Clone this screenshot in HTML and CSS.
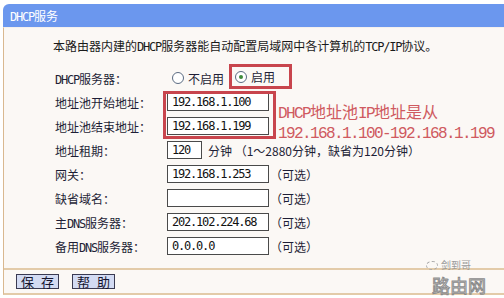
FILE: index.html
```html
<!DOCTYPE html>
<html lang="zh-CN">
<head>
<meta charset="utf-8">
<title>DHCP服务</title>
<link rel="stylesheet" href="styles.css">
</head>
<body>
<div class="page">
  <div class="header"><span class="hw">DHCP</span>服务</div>
  <div class="panel">
    <p class="desc">本路由器内建的<span class="hw">DHCP</span>服务器能自动配置局域网中各计算机的<span class="hw">TCP/IP</span>协议。</p>
    <div class="form">
      <div class="row">
        <span class="label"><span class="hw">DHCP</span>服务器：</span>
        <div class="radios">
          <span class="opt"><span class="radio"></span>不启用</span>
          <span class="opt mark"><span class="radio checked"></span>启用</span>
        </div>
      </div>
      <div class="row">
        <span class="label">地址池开始地址：</span>
        <span class="input">192.168.1.100</span>
      </div>
      <div class="row">
        <span class="label">地址池结束地址：</span>
        <span class="input">192.168.1.199</span>
      </div>
      <div class="row">
        <span class="label">地址租期：</span>
        <span class="input short">120</span>
        <span class="after">分钟 （1～2880分钟，缺省为120分钟）</span>
      </div>
      <div class="row">
        <span class="label">网关：</span>
        <span class="input">192.168.1.253</span>
        <span class="opt-note">（可选）</span>
      </div>
      <div class="row">
        <span class="label">缺省域名：</span>
        <span class="input"></span>
        <span class="opt-note">（可选）</span>
      </div>
      <div class="row">
        <span class="label">主<span class="hw">DNS</span>服务器：</span>
        <span class="input">202.102.224.68</span>
        <span class="opt-note">（可选）</span>
      </div>
      <div class="row">
        <span class="label">备用<span class="hw">DNS</span>服务器：</span>
        <span class="input">0.0.0.0</span>
        <span class="opt-note">（可选）</span>
      </div>
      <div class="callout-box"></div>
      <div class="callout-text">
        <div><span class="mono">DHCP</span>地址池<span class="mono">IP</span>地址是从</div>
        <div class="mono">192.168.1.100-192.168.1.199</div>
      </div>
    </div>
    <div class="footer">
      <span class="btn">保 存</span>
      <span class="btn">帮 助</span>
      <div class="watermark">
        <span class="wm-small"><span class="wm-icon"></span>剑到哥</span>
        <span class="wm-big">路由网</span>
      </div>
    </div>
  </div>
</div>
</body>
</html>
```

FILE: styles.css
```css
* { box-sizing: border-box; }

html, body {
  margin: 0;
  padding: 0;
  background: #ffffff;
  width: 504px;
  height: 298px;
  overflow: hidden;
}

body {
  font-family: "Noto Sans CJK SC", "Noto Sans", sans-serif;
  font-size: 12px;
  color: #1e1e36;
}

.hw {
  font-family: "DejaVu Sans Mono", "Noto Sans CJK SC", monospace;
  letter-spacing: -1.2px;
}

.page {
  padding: 4px 0 0 3px;
}

.header {
  height: 23px;
  line-height: 23px;
  background: #6b97ee;
  border-top-left-radius: 6px;
  color: #ffffff;
  padding-left: 7px;
  font-size: 12px;
}

.panel {
  background: #fbf8f5;
  border-left: 1px solid #d9b890;
  border-bottom: 2px solid #e3cba9;
  border-top: 1px solid #f4f0ee;
}

.desc {
  margin: 0;
  padding: 10px 0 0 49px;
  height: 38px;
  line-height: 16px;
  color: #1a1a1a;
  white-space: nowrap;
}

.form {
  position: relative;
  padding-left: 51px;
  padding-bottom: 10px;
}

.row {
  display: flex;
  align-items: center;
  height: 24px;
  white-space: nowrap;
}

.label {
  width: 112px;
  flex: none;
}

.radios {
  display: flex;
  align-items: center;
}

.opt {
  display: flex;
  align-items: center;
  gap: 4px;
  padding-left: 5px;
}

.opt.mark {
  margin-left: 5px;
  height: 25px;
  margin-top: -3px;
  border: 3px solid #c8454d;
  padding: 0 14px 0 3px;
}

.radio {
  width: 12px;
  height: 12px;
  border-radius: 50%;
  border: 1px solid #5b6b82;
  background: #ffffff;
  position: relative;
}

.radio.checked::after {
  content: "";
  position: absolute;
  left: 3px;
  top: 3px;
  width: 4px;
  height: 4px;
  border-radius: 50%;
  background: #3d8a3a;
}

.input {
  display: block;
  width: 102px;
  height: 18px;
  border: 1px solid #4a4a4a;
  background: #ffffff;
  padding: 0 4px;
  font-family: "DejaVu Sans Mono", monospace;
  font-size: 12px;
  letter-spacing: -1.2px;
  line-height: 16px;
  color: #111111;
  flex: none;
}

.input.short {
  width: 35px;
}

.after {
  margin-left: 6px;
}

.opt-note {
  margin-left: 1px;
}

.callout-box {
  position: absolute;
  left: 159px;
  top: 25px;
  width: 113px;
  height: 48px;
  border: 3px solid #c8454d;
  pointer-events: none;
}

.callout-text {
  position: absolute;
  left: 274px;
  top: 35px;
  font-size: 16px;
  line-height: 20px;
  color: #cf5a60;
  white-space: nowrap;
}

.mono {
  font-family: "Liberation Mono", monospace;
  letter-spacing: -1.6px;
}

.footer {
  position: relative;
  height: 25px;
  border-top: 2px solid #e3cba9;
  display: flex;
  align-items: center;
  gap: 13px;
  padding-left: 12px;
}

.btn {
  display: flex;
  align-items: center;
  justify-content: center;
  width: 43px;
  height: 15px;
  background: #d3dbf3;
  border: 1px solid #3a3a52;
  font-size: 13px;
  line-height: 13px;
  letter-spacing: 2px;
  padding-left: 2px;
  white-space: pre;
  color: #15152e;
}

.watermark {
  position: absolute;
  right: 4px;
  top: -10px;
  width: 74px;
  height: 34px;
}

.wm-small {
  position: absolute;
  left: 0;
  top: 0;
  display: flex;
  align-items: center;
  gap: 3px;
  font-size: 10px;
  line-height: 10px;
  color: #9a9a9a;
}

.wm-icon {
  width: 12px;
  height: 9px;
  border: 1px dashed #a8a8a8;
  border-radius: 50%;
}

.wm-big {
  position: absolute;
  left: 6px;
  top: 16px;
  font-size: 18px;
  line-height: 18px;
  color: rgba(255, 255, 255, 0.4);
  -webkit-text-stroke: 1px #8c8c8c;
}
```
